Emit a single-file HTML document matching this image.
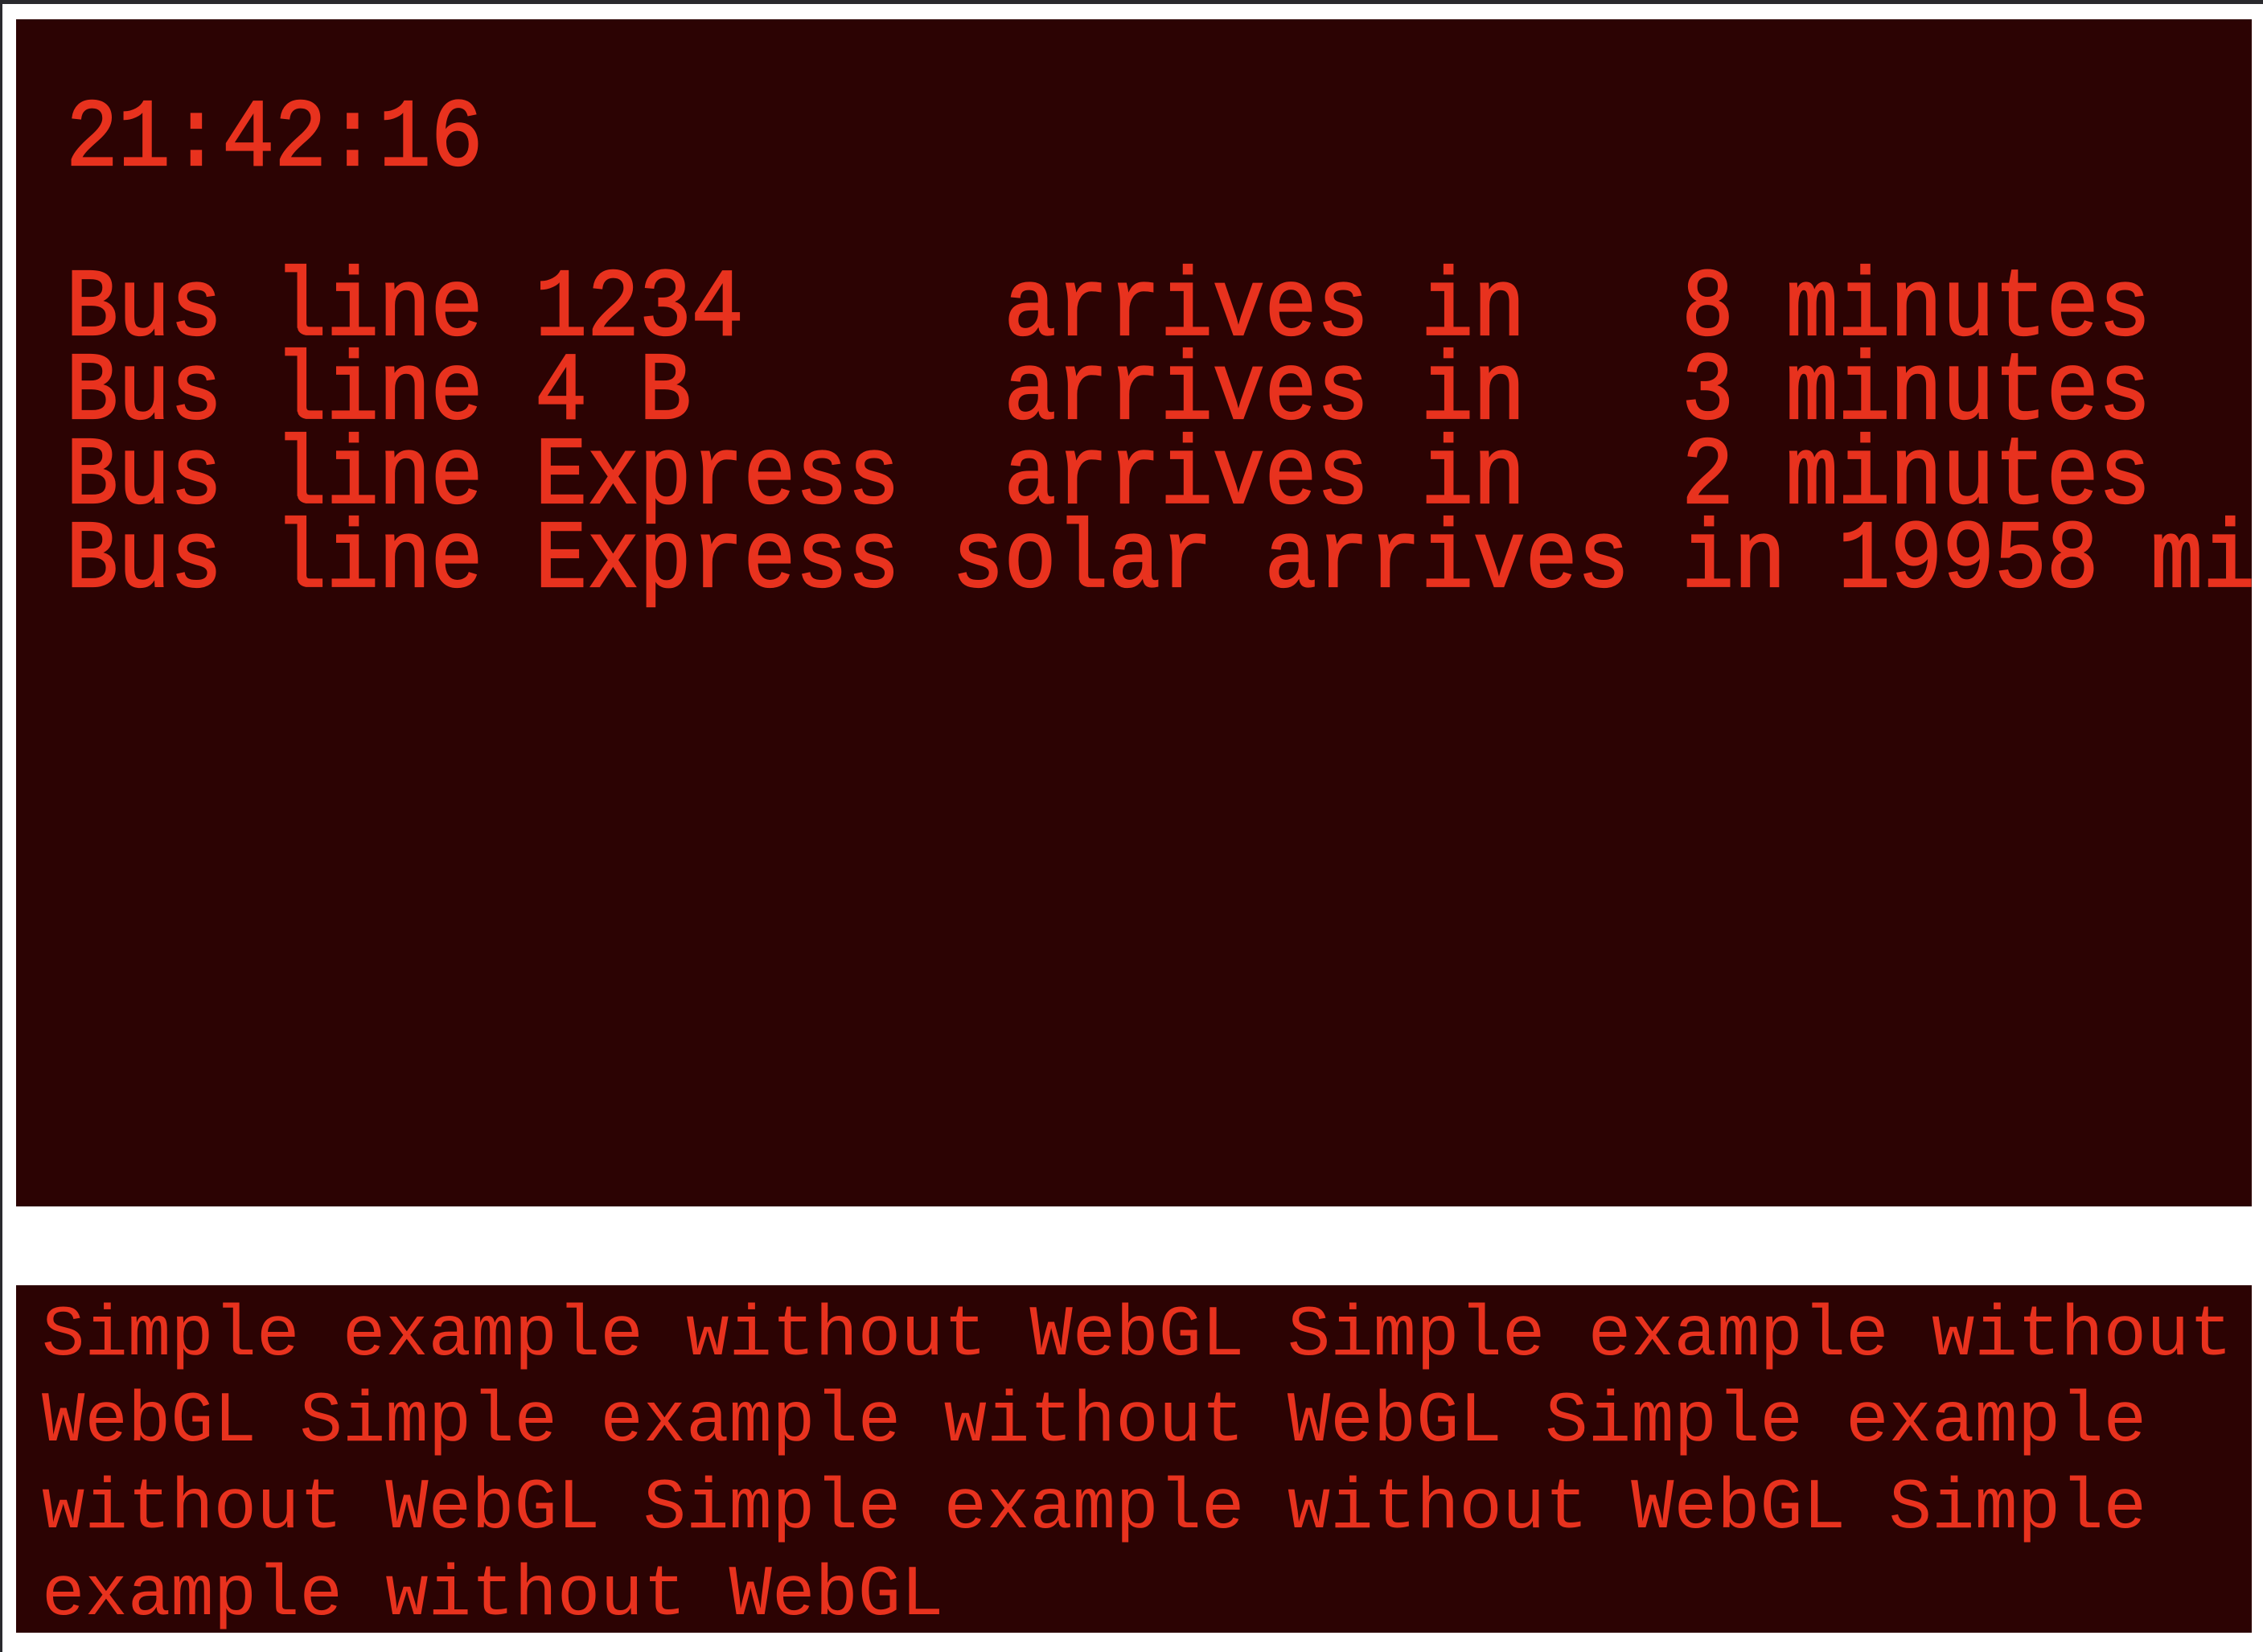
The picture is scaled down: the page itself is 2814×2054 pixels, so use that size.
<!DOCTYPE html>
<html><head><style>
body{margin:0;width:2814px;height:2054px;background:#fff;position:relative;overflow:hidden}
.topbar{position:absolute;left:0;top:0;width:2814px;height:5px;background:#2a2a2e}
.lb{position:absolute;left:0;top:0;width:3px;height:2054px;background:#2a2a2e}
.p{position:absolute;background:#2c0303;overflow:hidden}
.t{position:absolute;white-space:pre;font-family:"Liberation Mono",monospace;color:#e8321e;margin:0}
.big{font-size:108px;line-height:108px;transform:scaleY(1.11);transform-origin:0 83px;-webkit-text-stroke:2px #e8321e}
.sm{font-size:89px;line-height:89px}
</style></head><body>
<div class="topbar"></div><div class="lb"></div>
<div class="p" style="left:20px;top:24px;width:2780px;height:1476px"></div>
<div class="p" style="left:20px;top:1598px;width:2780px;height:432px"></div>
<div style="position:absolute;left:0;top:0;width:2800px;height:1500px;overflow:hidden">
<div class="t big" style="left:82px;top:123px">21:42:16</div>
<div class="t big" style="left:82px;top:334px">Bus line 1234     arrives in   8 minutes</div>
<div class="t big" style="left:82px;top:438px">Bus line 4 B      arrives in   3 minutes</div>
<div class="t big" style="left:82px;top:543px">Bus line Express  arrives in   2 minutes</div>
<div class="t big" style="left:82px;top:647px">Bus line Express solar arrives in 19958 minutes</div>
</div>
<div class="t sm" style="left:52px;top:1616px">Simple example without WebGL Simple example without</div>
<div class="t sm" style="left:52px;top:1723px">WebGL Simple example without WebGL Simple example</div>
<div class="t sm" style="left:52px;top:1831px">without WebGL Simple example without WebGL Simple</div>
<div class="t sm" style="left:52px;top:1939px">example without WebGL</div>
</body></html>
